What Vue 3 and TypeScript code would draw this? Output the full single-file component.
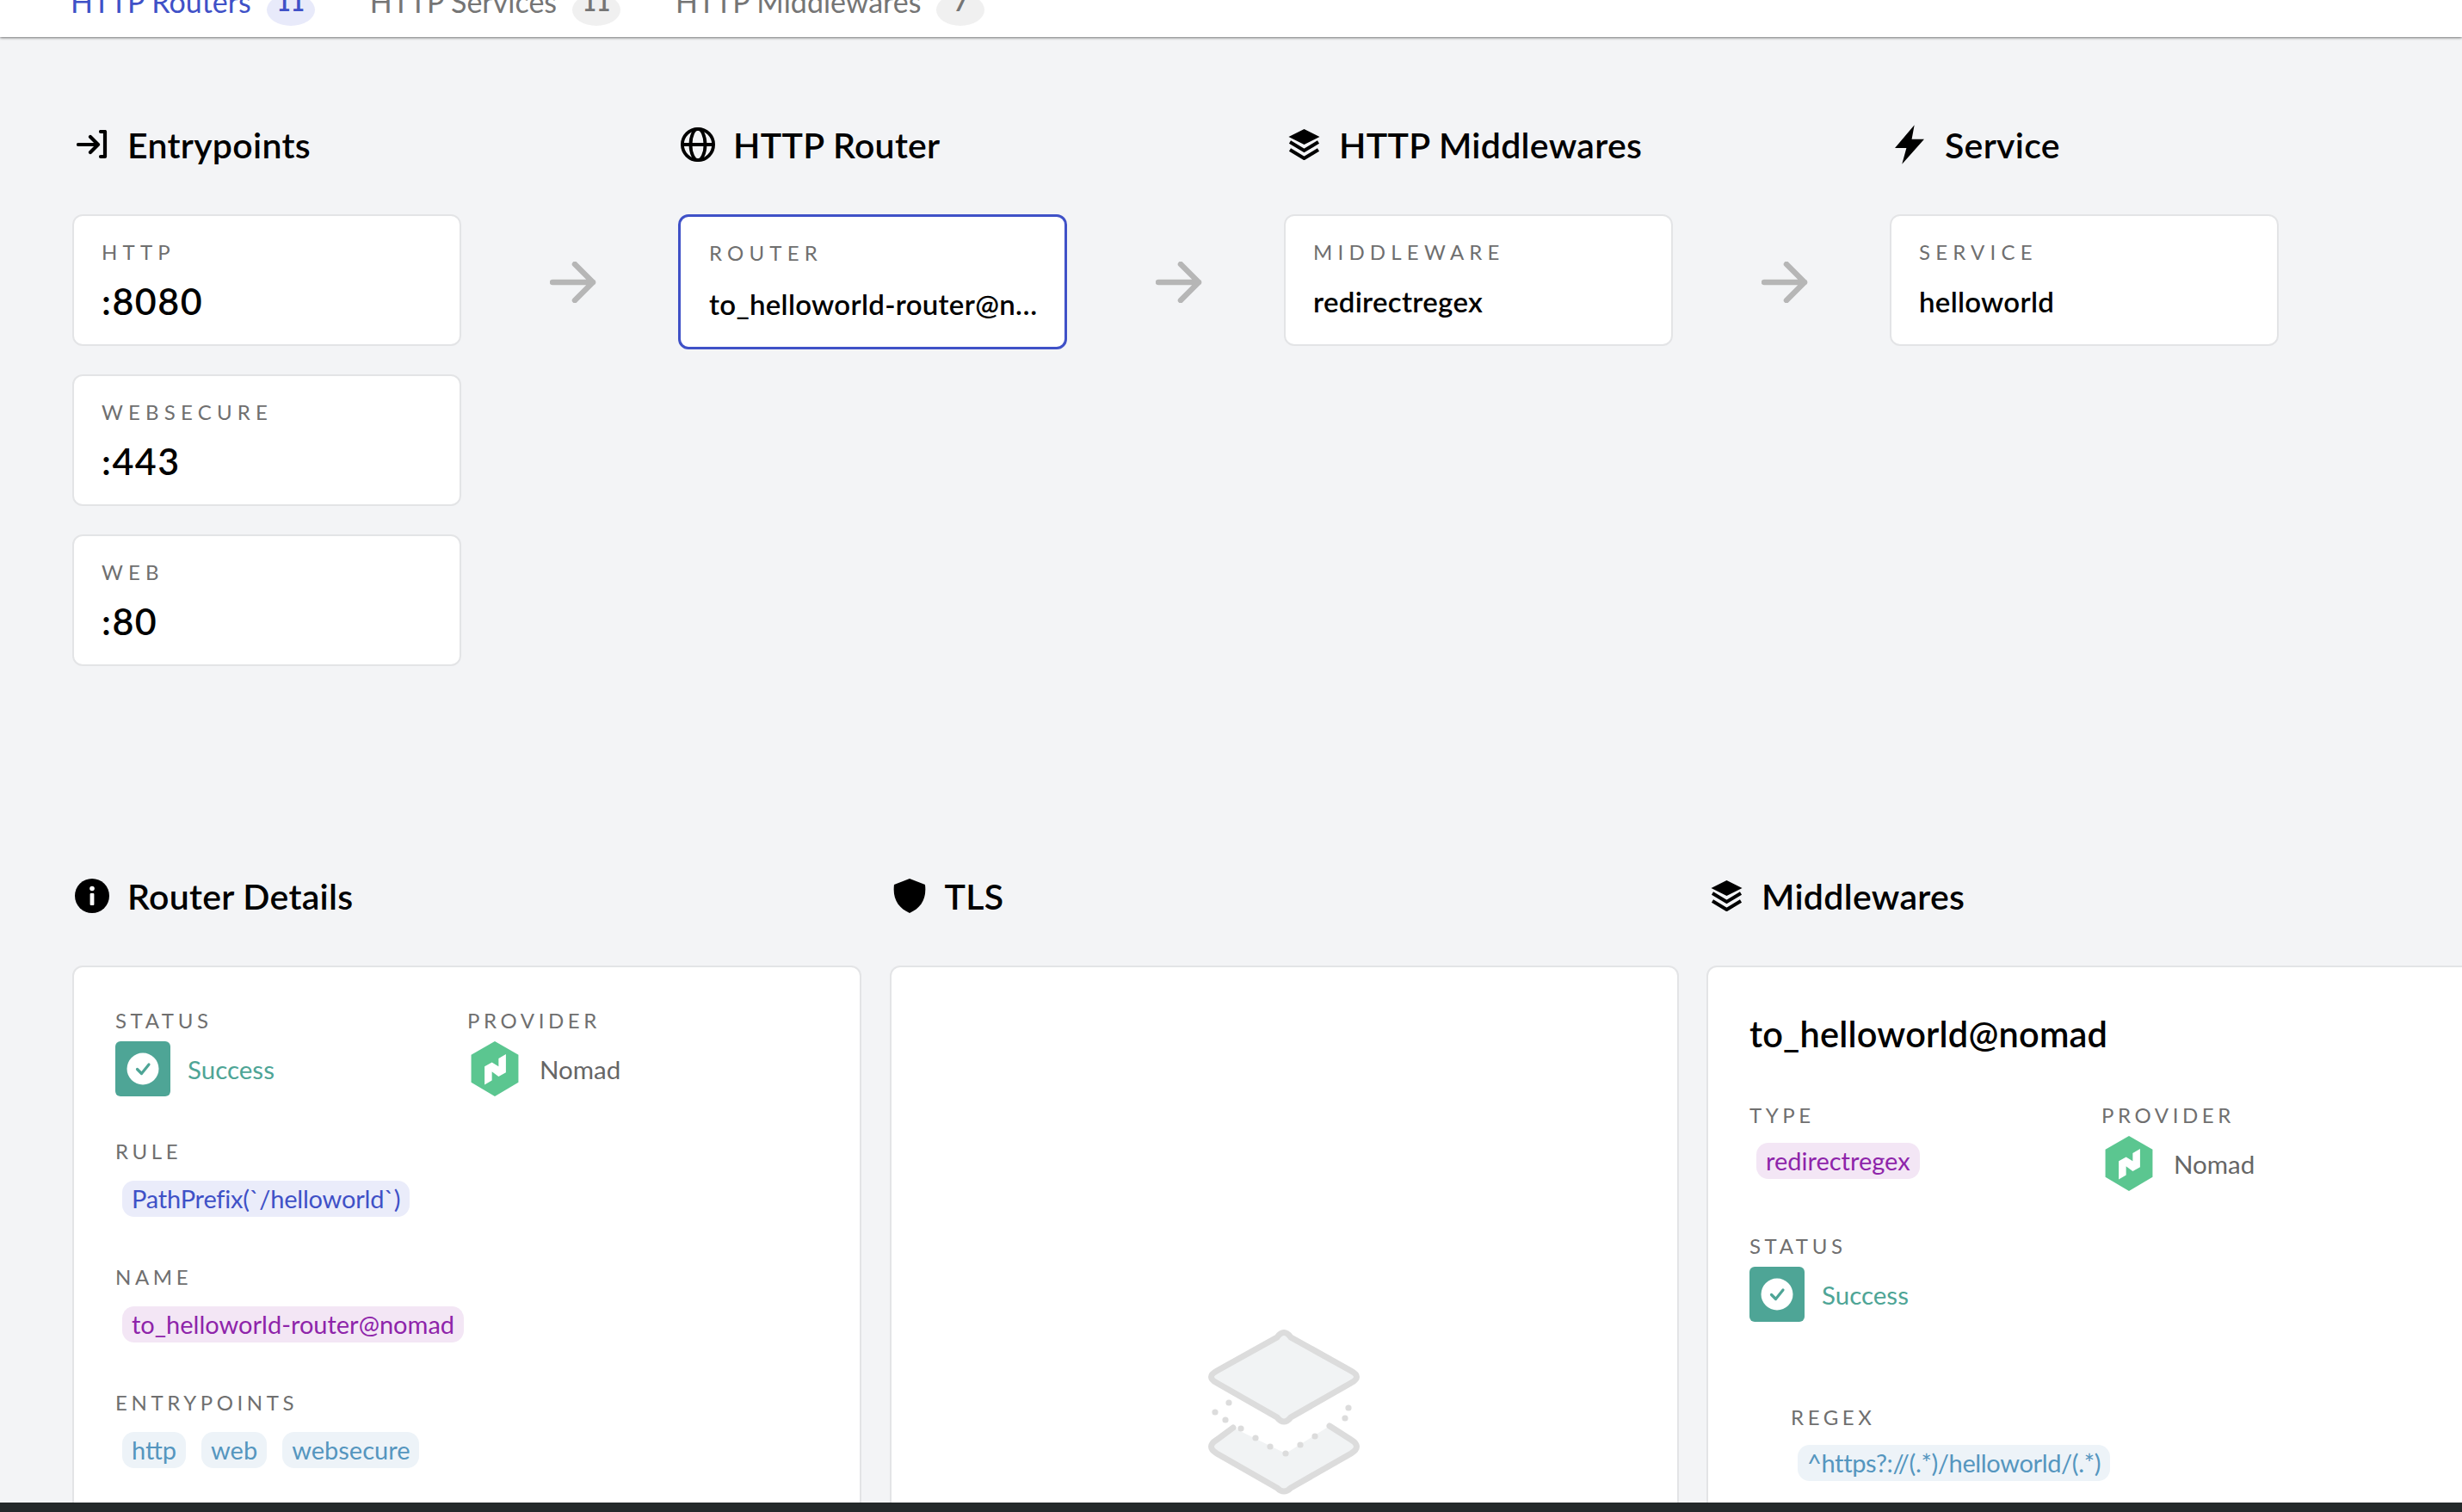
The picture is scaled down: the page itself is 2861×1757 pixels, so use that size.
<script setup lang="ts">
const tabs = [
  { name: 'HTTP Routers', count: 11, active: true },
  { name: 'HTTP Services', count: 11, active: false },
  { name: 'HTTP Middlewares', count: 7, active: false },
]

const entrypoints = [
  { label: 'HTTP', value: ':8080' },
  { label: 'WEBSECURE', value: ':443' },
  { label: 'WEB', value: ':80' },
]

const routerEntrypoints = ['http', 'web', 'websecure']

const dots = [
  [24, 85], [8, 96], [20, 105], [38, 115], [55, 126], [72, 136],
  [90, 144], [107, 134], [124, 124], [163, 91], [159, 103],
]
</script>

<template>
  <div class="page">
    <svg class="defs" width="0" height="0">
      <defs>
        <symbol id="layers" viewBox="0 0 36 36">
          <path d="M18 0 36 9 18 18 0 9Z" fill="#000" />
          <path d="M1.5 15 18 25 34.5 15M1.5 24 18 34 34.5 24" fill="none" stroke="#000" stroke-width="4" />
        </symbol>
        <symbol id="success" viewBox="0 0 64 64">
          <rect width="64" height="64" rx="6" fill="#4ea596" />
          <circle cx="32" cy="32" r="18.5" fill="#fff" />
          <path d="M25.5 32.5 30.5 37.5 39 27" fill="none" stroke="#4ea596" stroke-width="3.2" stroke-linecap="round" stroke-linejoin="round" />
        </symbol>
        <symbol id="nomad" viewBox="0 0 54 63">
          <path d="M27 0 54 15.5V47L27 63 0 47V15.5Z" fill="#5bc690" />
          <path d="M15.3 28.7 23.7 24 31.3 28.7V19.7L39.7 14.7V35.7L31.3 40.3 23.7 34.7V44.7L15.3 49.7Z" fill="#fff" />
        </symbol>
      </defs>
    </svg>

    <header class="topbar">
      <nav class="tabs">
        <div v-for="tab in tabs" :key="tab.name" class="tab" :class="{ active: tab.active }">
          <span class="tab-name">{{ tab.name }}</span>
          <span class="tab-count">{{ tab.count }}</span>
        </div>
      </nav>
    </header>

    <main class="content">
      <section class="flow">
        <h2 class="heading">
          <span class="heading-icon">
            <svg width="36" height="34" viewBox="0 0 36 34" fill="none" stroke="#000" stroke-width="4.2" stroke-linecap="round" stroke-linejoin="round">
              <path d="M2 17H25M16 8l9 9-9 9M28 2h5v29h-5" />
            </svg>
          </span>
          Entrypoints
        </h2>
        <span></span>
        <h2 class="heading">
          <span class="heading-icon">
            <svg width="40" height="40" viewBox="0 0 40 40" fill="none" stroke="#000" stroke-width="3.8">
              <circle cx="20" cy="20" r="18.1" />
              <ellipse cx="20" cy="20" rx="8.5" ry="18.1" />
              <path d="M2 20H38" />
            </svg>
          </span>
          HTTP Router
        </h2>
        <span></span>
        <h2 class="heading">
          <span class="heading-icon">
            <svg width="37" height="36"><use href="#layers" /></svg>
          </span>
          HTTP Middlewares
        </h2>
        <span></span>
        <h2 class="heading">
          <span class="heading-icon">
            <svg width="34" height="46" viewBox="0 0 33 44">
              <path d="M22 0 0 26H13L8 44 33 16H19Z" fill="#000" />
            </svg>
          </span>
          Service
        </h2>

        <div class="stack">
          <div v-for="ep in entrypoints" :key="ep.label" class="node">
            <div class="label node-label">{{ ep.label }}</div>
            <div class="node-value big">{{ ep.value }}</div>
          </div>
        </div>
        <div class="arrow">
          <svg width="54" height="48" viewBox="0 0 54 48" fill="none" stroke="#b6b6b6" stroke-width="6.5" stroke-linecap="round" stroke-linejoin="round">
            <path d="M3 24H50M29 3 50 24 29 45" />
          </svg>
        </div>
        <div class="stack">
          <div class="node current">
            <div class="label node-label">ROUTER</div>
            <div class="node-value">to_helloworld-router@nomad</div>
          </div>
        </div>
        <div class="arrow">
          <svg width="54" height="48" viewBox="0 0 54 48" fill="none" stroke="#b6b6b6" stroke-width="6.5" stroke-linecap="round" stroke-linejoin="round">
            <path d="M3 24H50M29 3 50 24 29 45" />
          </svg>
        </div>
        <div class="stack">
          <div class="node">
            <div class="label node-label">MIDDLEWARE</div>
            <div class="node-value">redirectregex</div>
          </div>
        </div>
        <div class="arrow">
          <svg width="54" height="48" viewBox="0 0 54 48" fill="none" stroke="#b6b6b6" stroke-width="6.5" stroke-linecap="round" stroke-linejoin="round">
            <path d="M3 24H50M29 3 50 24 29 45" />
          </svg>
        </div>
        <div class="stack">
          <div class="node">
            <div class="label node-label">SERVICE</div>
            <div class="node-value">helloworld</div>
          </div>
        </div>
      </section>

      <section class="details">
        <h2 class="heading">
          <span class="heading-icon">
            <svg width="40" height="40" viewBox="0 0 40 40">
              <circle cx="20" cy="20" r="20" fill="#000" />
              <circle cx="20" cy="11.5" r="2.8" fill="#fff" />
              <rect x="17.6" y="17" width="4.8" height="14" rx="1" fill="#fff" />
            </svg>
          </span>
          Router Details
        </h2>
        <h2 class="heading">
          <span class="heading-icon">
            <svg width="38" height="40" viewBox="0 0 38 40">
              <path d="M19 0 37 7C39 24 32 34 19 40 6 34-1 24 1 7Z" fill="#000" />
            </svg>
          </span>
          TLS
        </h2>
        <h2 class="heading">
          <span class="heading-icon">
            <svg width="37" height="36"><use href="#layers" /></svg>
          </span>
          Middlewares
        </h2>

        <div class="panel">
          <div class="two-col gap-below">
            <div>
              <div class="label">STATUS</div>
              <div class="with-icon">
                <svg width="64" height="64"><use href="#success" /></svg>
                <span class="success">Success</span>
              </div>
            </div>
            <div>
              <div class="label">PROVIDER</div>
              <div class="with-icon provider">
                <svg width="56" height="64"><use href="#nomad" /></svg>
                <span class="provider-name">Nomad</span>
              </div>
            </div>
          </div>
          <div class="field">
            <div class="label">RULE</div>
            <div class="chips"><span class="chip blue">PathPrefix(`/helloworld`)</span></div>
          </div>
          <div class="field">
            <div class="label">NAME</div>
            <div class="chips"><span class="chip purple">to_helloworld-router@nomad</span></div>
          </div>
          <div class="field">
            <div class="label">ENTRYPOINTS</div>
            <div class="chips">
              <span v-for="ep in routerEntrypoints" :key="ep" class="chip sky">{{ ep }}</span>
            </div>
          </div>
        </div>

        <div class="panel empty">
          <svg width="176" height="192" viewBox="0 0 176 192">
            <path d="M80 9Q88-2 96 9L166 48Q179 55 166 62L96 102Q88 112 80 102L10 62Q-3 55 10 48Z" fill="#f1f3f4" stroke="#dcdcdc" stroke-width="7" />
            <path d="M29 114 4 137 88 188 172 137 141 112 90 144Z" fill="#f1f3f4" />
            <path d="M29 114 10 128Q-3 136 10 144L80 184Q88 192 96 184L166 144Q179 136 166 128L141 112" fill="none" stroke="#dcdcdc" stroke-width="7" stroke-linecap="round" />
            <circle v-for="d in dots" :key="d[0]" :cx="d[0]" :cy="d[1]" r="3.6" fill="#dcdcdc" />
          </svg>
        </div>

        <div class="panel">
          <div class="panel-title">to_helloworld@nomad</div>
          <div class="two-col gap-below">
            <div>
              <div class="label">TYPE</div>
              <div class="chips"><span class="chip purple">redirectregex</span></div>
            </div>
            <div>
              <div class="label">PROVIDER</div>
              <div class="with-icon provider">
                <svg width="56" height="64"><use href="#nomad" /></svg>
                <span class="provider-name">Nomad</span>
              </div>
            </div>
          </div>
          <div>
            <div class="label">STATUS</div>
            <div class="with-icon">
              <svg width="64" height="64"><use href="#success" /></svg>
              <span class="success">Success</span>
            </div>
          </div>
          <div class="options">
            <div class="label">REGEX</div>
            <div class="chips"><span class="chip sky tight">^https?://(.*)/helloworld/(.*)</span></div>
          </div>
        </div>
      </section>
    </main>

    <footer class="edge"></footer>
  </div>
</template>

<style>
body {
  margin: 0;
  background: #f3f4f6;
}
</style>

<style scoped>
.page {
  width: 2861px;
  height: 1757px;
  display: flex;
  flex-direction: column;
  overflow: hidden;
  background: #f3f4f6;
  font-family: Lato, "Open Sans", sans-serif;
  color: #000;
}

.defs {
  position: absolute;
}

.topbar {
  flex: none;
  height: 43px;
  background: #fff;
  box-shadow: 0 1px 3px rgba(0, 0, 0, 0.55);
  overflow: hidden;
  position: relative;
}

.tabs {
  display: flex;
  gap: 64px;
  margin-top: -17px;
  padding-left: 82px;
}

.tab {
  display: flex;
  align-items: center;
  gap: 18px;
  font-size: 34px;
  color: #757575;
  line-height: 37px;
}

.tab.active {
  color: #3f51c7;
}

.tab-name {
  margin-bottom: 20px;
}

.tab-count {
  width: 56px;
  height: 37px;
  line-height: 18px;
  border-radius: 50%;
  background: #f0f0f0;
  text-align: center;
  font-weight: 700;
  font-size: 28px;
}

.tab.active .tab-count {
  background: #e8eafa;
}

.content {
  flex: 1;
  min-height: 0;
  overflow: hidden;
  padding: 100px 0 0 84px;
}

.flow {
  display: grid;
  grid-template-columns: 452px 252px 452px 252px 452px 252px 452px;
  row-gap: 56px;
  align-items: start;
}

.heading {
  margin: 0;
  display: flex;
  align-items: center;
  height: 50px;
  font-size: 41px;
  letter-spacing: 0.3px;
  font-weight: 600;
  white-space: nowrap;
}

.heading-icon {
  flex: none;
  width: 46px;
  margin-right: 18px;
  display: flex;
  justify-content: center;
}

.stack {
  display: flex;
  flex-direction: column;
  gap: 33px;
}

.node {
  box-sizing: border-box;
  width: 452px;
  height: 153px;
  padding: 30px 32px 0;
  background: #fff;
  border: 2px solid #e3e4e6;
  border-radius: 12px;
}

.node.current {
  height: 157px;
  border: 3px solid #3f51c7;
  padding: 30px 26px 0 33px;
}

.label {
  font-size: 24px;
  line-height: 24px;
  letter-spacing: 4.6px;
  color: #6f6f6f;
  white-space: nowrap;
}

.node-label {
  letter-spacing: 6.2px;
}

.node-value {
  margin-top: 24px;
  font-size: 33px;
  letter-spacing: 0.3px;
  line-height: 42px;
  font-weight: 600;
  white-space: nowrap;
  overflow: hidden;
  text-overflow: ellipsis;
}

.node.current .node-value {
  margin-top: 26px;
}

.node-value.big {
  font-size: 43px;
  letter-spacing: 1.5px;
}

.arrow {
  padding-top: 55px;
  padding-left: 103px;
}

.details {
  margin-top: 242px;
  display: grid;
  grid-template-columns: repeat(3, 917px);
  column-gap: 32.5px;
  row-gap: 56px;
  align-items: start;
}

.panel {
  box-sizing: border-box;
  height: 1000px;
  padding: 50px 48px 0;
  background: #fff;
  border: 2px solid #e3e4e6;
  border-radius: 12px;
}

.panel.empty {
  display: flex;
  justify-content: center;
  padding-top: 421px;
}

.panel-title {
  margin-top: 2px;
  font-size: 41.5px;
  letter-spacing: 0.2px;
  font-weight: 600;
  line-height: 50px;
  margin-bottom: 58px;
}

.two-col {
  display: grid;
  grid-template-columns: 409px 1fr;
}

.gap-below {
  margin-bottom: 52px;
}

.with-icon {
  display: flex;
  align-items: center;
  margin-top: 12px;
  gap: 20px;
  height: 64px;
}

.with-icon svg {
  flex: none;
}

.provider {
  padding-left: 4px;
  gap: 24px;
}

.success {
  font-size: 29.5px;
  color: #4ea596;
}

.provider-name {
  font-size: 29.5px;
  color: #666;
}

.field {
  margin-bottom: 58px;
}

.chips {
  display: flex;
  gap: 18px;
  margin: 22px 0 0 8px;
}

.two-col .chips,
.options .chips {
  margin-top: 20px;
}

.chip {
  height: 42px;
  line-height: 41px;
  padding: 0 11px;
  border-radius: 14px;
  font-size: 29px;
  white-space: nowrap;
}

.chip.blue {
  background: #eaecfa;
  color: #3f51c7;
  letter-spacing: -0.2px;
}

.chip.purple {
  background: #f3e6f5;
  color: #8e24aa;
}

.chip.sky {
  background: #edf3f8;
  color: #5596bf;
}

.chip.tight {
  letter-spacing: -0.35px;
}

.options {
  margin: 99px 0 0 48px;
}

.edge {
  flex: none;
  height: 11px;
  background: #24292a;
}
</style>
